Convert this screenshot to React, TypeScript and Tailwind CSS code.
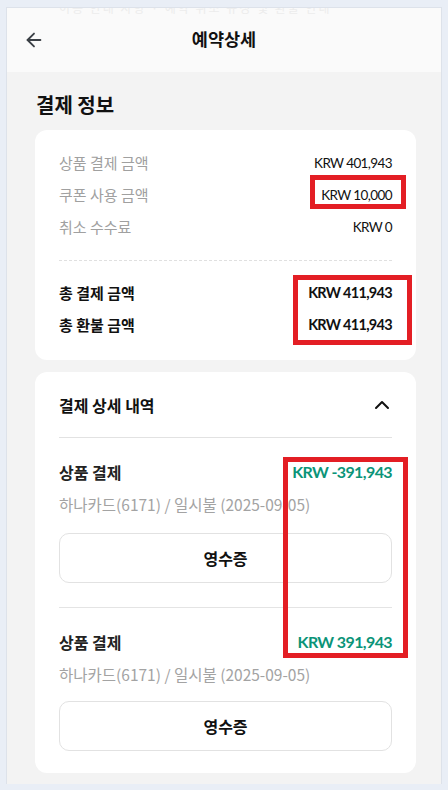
import { ChevronUp, ArrowLeft } from "lucide-react";

const num = { fontFamily: "Lato, 'Noto Sans CJK KR', sans-serif" };

function PaymentItem({ amount, last }: { amount: string; last?: boolean }) {
  return (
    <div className={last ? "pt-[22px]" : "pt-[22px] pb-[24px] border-b border-[#e4e4e4]"}>
      <div className="flex items-center justify-between h-[24px]">
        <span className="text-[16px] font-bold text-[#222]">상품 결제</span>
        <span className="text-[16px] font-bold text-[#0b9478] tracking-[-0.6px]" style={num}>
          {amount}
        </span>
      </div>
      <div className="mt-[9px] text-[15.5px] text-[#a3a3a3] h-[22px] whitespace-nowrap">
        하나카드(6171) / 일시불 (2025-09-05)
      </div>
      <button
        className={`${last ? "mt-[16px]" : "mt-[18px]"} w-full h-[50px] rounded-[10px] border border-[#e2e2e2] bg-white text-[16px] font-bold text-[#111]`}
      >
        영수증
      </button>
    </div>
  );
}

export default function App() {
  return (
    <div
      className="w-[448px] h-[790px] bg-[#e9eef6] pt-[7px] pl-[6px] overflow-hidden relative"
      style={{ fontFamily: "'Noto Sans CJK KR', 'Noto Sans', sans-serif" }}
    >
      <div className="w-[436px] h-[777px] border-l border-r border-t border-[#dde2ea] bg-[#f3f3f3] overflow-hidden">
        {/* Header */}
        <div className="h-[64px] bg-[#fafafa] relative">
          <div className="h-[6px] overflow-hidden">
            <div className="-mt-[9px] pl-[52px] text-[12px] text-[#ececec] tracking-[2px] whitespace-nowrap">
              이용 안내 사항 · 예약 취소 규정 및 환불 안내
            </div>
          </div>
          <div className="flex items-center h-[52px] px-[16px] relative">
            <ArrowLeft size={22} strokeWidth={2} className="text-[#3a3f45]" />
            <div className="absolute left-0 right-0 -mt-[2px] text-center text-[17.5px] font-bold text-[#111] pointer-events-none">
              예약상세
            </div>
          </div>
        </div>

        <div className="px-[28px]">
          <h2 className="pt-[18px] pb-[10px] pl-[1px] text-[20px] font-bold text-[#111] leading-[30px]">결제 정보</h2>

          {/* Summary card */}
          <div className="bg-white rounded-[12px] px-[24px] pt-[22px] pb-[24px] w-[381px]">
            <div className="flex flex-col gap-[10px]">
              {[
                ["상품 결제 금액", "KRW 401,943"],
                ["쿠폰 사용 금액", "KRW 10,000"],
                ["취소 수수료", "KRW 0"],
              ].map(([k, v]) => (
                <div key={k} className="flex items-center justify-between h-[22px]">
                  <span className="text-[15px] text-[#a0a0a0]">{k}</span>
                  <span className="text-[13.5px] text-[#111] tracking-[-0.6px]" style={num}>
                    {v}
                  </span>
                </div>
              ))}
            </div>
            <div className="mt-[22px] border-t border-dashed border-[#e0e0e0]" />
            <div className="mt-[21px] flex flex-col gap-[10px]">
              {[
                ["총 결제 금액", "KRW 411,943"],
                ["총 환불 금액", "KRW 411,943"],
              ].map(([k, v]) => (
                <div key={k} className="flex items-center justify-between h-[22px]">
                  <span className="text-[15px] font-bold text-[#111]">{k}</span>
                  <span className="text-[14.5px] font-bold text-[#111] tracking-[-0.7px]" style={num}>
                    {v}
                  </span>
                </div>
              ))}
            </div>
          </div>

          {/* Details card */}
          <div className="mt-[12px] bg-white rounded-[12px] px-[24px] pb-[22px] w-[381px]">
            <div className="flex items-center justify-between h-[66px] border-b border-[#e2e2e2]">
              <span className="text-[16px] font-bold text-[#111]">결제 상세 내역</span>
              <ChevronUp size={24} strokeWidth={2} className="text-[#111] -mr-[2px]" />
            </div>
            <PaymentItem amount="KRW -391,943" />
            <PaymentItem amount="KRW 391,943" last />
          </div>
        </div>
      </div>

      {/* annotation boxes */}
      <div className="absolute left-[310px] top-[175px] w-[96px] h-[34px] border-[5px] border-[#e31e24]" />
      <div className="absolute left-[293px] top-[275px] w-[119px] h-[70px] border-[5px] border-[#e31e24]" />
      <div className="absolute left-[283px] top-[457px] w-[125px] h-[201px] border-[5px] border-[#e31e24]" />
    </div>
  );
}
